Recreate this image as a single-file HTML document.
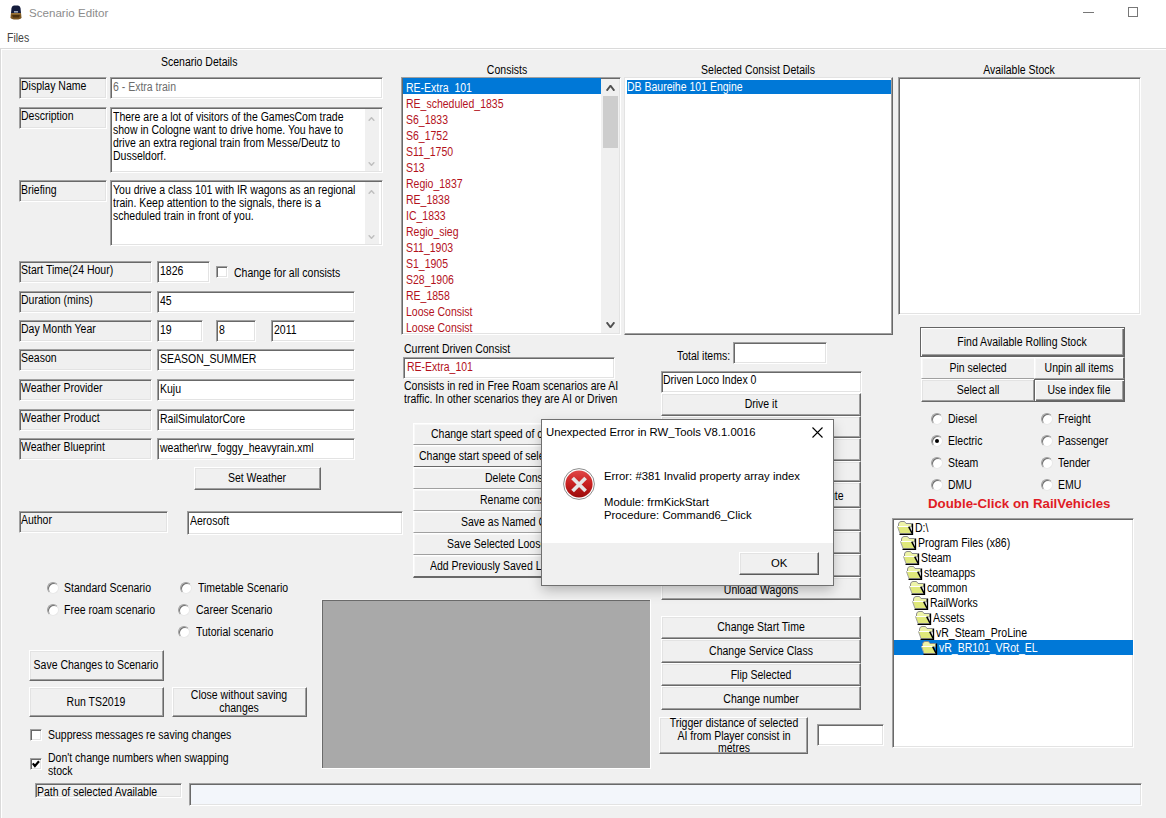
<!DOCTYPE html>
<html><head><meta charset="utf-8"><style>
*{box-sizing:border-box;margin:0;padding:0}
html,body{width:1166px;height:818px;overflow:hidden;background:#f0f0f0}
body{position:relative;font-family:"Liberation Sans",sans-serif;font-size:12px;line-height:12px;color:#000}
.r{position:absolute}
.t{position:absolute;white-space:pre;font-size:12px;line-height:12px;transform:scaleX(.875);transform-origin:0 0}
.t.c{transform:translateX(-50%) scaleX(.875);transform-origin:50% 0}
.dt{position:absolute;white-space:pre;font-size:11.3px;line-height:12px;color:#000}
.sk{position:absolute;border:1px solid;border-color:#a0a0a0 #fff #fff #a0a0a0;box-shadow:inset 1px 1px #696969,inset -1px -1px #e3e3e3}
.bt{position:absolute;background:#f0f0f0;border:1px solid;border-color:#fff #696969 #696969 #fff;box-shadow:inset -1px -1px #a0a0a0,inset 1px 1px #e3e3e3}
.bt.fl{border-color:#fff #a0a0a0 #a0a0a0 #fff;box-shadow:inset 1px 1px #f8f8f8}
.bt.df{border:1px solid #646464;box-shadow:inset 1px 1px #fff,inset -1px -1px #696969,inset -2px -2px #a0a0a0}
.rd{position:absolute;width:12px;height:12px;border-radius:50%;background:#fff;box-shadow:inset 1px 1px 0 0 #707070;border:1px solid;border-color:#a0a0a0 #e8e8e8 #e8e8e8 #a0a0a0}
.rd.on::after{content:"";position:absolute;left:3px;top:3px;width:4px;height:4px;border-radius:50%;background:#000}
.cb{position:absolute;width:12px;height:12px;background:#fff;border:1px solid;border-color:#a0a0a0 #fff #fff #a0a0a0;box-shadow:inset 1px 1px #696969,inset -1px -1px #e3e3e3}
</style></head><body>
<div class="r" style="left:0px;top:0px;width:1166px;height:48px;background:#fff"></div>
<div class="r" style="left:0px;top:48px;width:1166px;height:1px;background:#dadada"></div>
<div class="r" style="left:0px;top:49px;width:1166px;height:1px;background:#fff"></div>
<div class="r" style="left:0px;top:48px;width:1px;height:770px;background:#dadada"></div>
<div class="r" style="left:1px;top:49px;width:1px;height:769px;background:#fff"></div>
<svg class="r" style="left:10px;top:5px" width="12" height="15" viewBox="0 0 12 15"><path d="M1.5 3 Q2 0.5 4 0.5 L8 0.5 Q10 0.5 10.5 3 L11 8 L1 8 Z" fill="#141c3c"/><rect x="4" y="6" width="4" height="1.6" fill="#9aa4b8"/><path d="M1 8 L11 8 L11.5 12.5 Q11 14.5 6 14.5 Q1 14.5 0.5 12.5 Z" fill="#7a5520"/><path d="M2 9.5 L10 9.5 L9 12.5 L3 12.5 Z" fill="#4a300e"/><rect x="1.5" y="8.3" width="9" height="1.2" fill="#a88040"/></svg>
<div class="dt" style="left:29px;top:7px;font-size:11.6px;color:#8c8c8c">Scenario Editor</div>
<div class="r" style="left:1083px;top:12px;width:11px;height:1px;background:#777"></div>
<div class="r" style="left:1128px;top:7px;width:10px;height:10px;border:1px solid #777"></div>
<div class="t" style="left:7px;top:32px;color:#444;">Files</div>
<div class="t" style="left:161px;top:56px;">Scenario Details</div>
<div class="sk" style="left:19px;top:77px;width:88px;height:22px;background:#f0f0f0;"></div>
<div class="t" style="left:21px;top:80px;">Display Name</div>
<div class="sk" style="left:110px;top:77px;width:273px;height:22px;background:#fff;"></div>
<div class="t" style="left:113px;top:81px;color:#6d6d6d;">6 - Extra train</div>
<div class="sk" style="left:19px;top:107px;width:88px;height:22px;background:#f0f0f0;"></div>
<div class="t" style="left:21px;top:110px;">Description</div>
<div class="sk" style="left:110px;top:107px;width:273px;height:66px;background:#fff;"></div>
<div class="r" style="left:365px;top:109px;width:14px;height:62px;background:#f0f0f0"></div>
<div class="t" style="left:113px;top:111px;">There are a lot of visitors of the GamesCom trade</div>
<div class="t" style="left:113px;top:124px;">show in Cologne want to drive home. You have to</div>
<div class="t" style="left:113px;top:137px;">drive an extra regional train from Messe/Deutz to</div>
<div class="t" style="left:113px;top:150px;">Dusseldorf.</div>
<div class="sk" style="left:19px;top:180px;width:88px;height:22px;background:#f0f0f0;"></div>
<div class="t" style="left:21px;top:184px;">Briefing</div>
<div class="sk" style="left:110px;top:180px;width:273px;height:66px;background:#fff;"></div>
<div class="r" style="left:365px;top:182px;width:14px;height:62px;background:#f0f0f0"></div>
<div class="t" style="left:113px;top:184px;">You drive a class 101 with IR wagons as an regional</div>
<div class="t" style="left:113px;top:197px;">train. Keep attention to the signals, there is a</div>
<div class="t" style="left:113px;top:210px;">scheduled train in front of you.</div>
<svg class="r" style="left:368px;top:117px" width="7" height="4"><path d="M0.7 3.7 L3.5 0.7 L6.3 3.7" stroke="#c0c0c0" stroke-width="1.5" fill="none"/></svg>
<svg class="r" style="left:368px;top:162px" width="7" height="4"><path d="M0.7 0.3 L3.5 3.3 L6.3 0.3" stroke="#c0c0c0" stroke-width="1.5" fill="none"/></svg>
<svg class="r" style="left:368px;top:190px" width="7" height="4"><path d="M0.7 3.7 L3.5 0.7 L6.3 3.7" stroke="#c0c0c0" stroke-width="1.5" fill="none"/></svg>
<svg class="r" style="left:368px;top:235px" width="7" height="4"><path d="M0.7 0.3 L3.5 3.3 L6.3 0.3" stroke="#c0c0c0" stroke-width="1.5" fill="none"/></svg>
<div class="sk" style="left:19px;top:261px;width:133px;height:22px;background:#f0f0f0;"></div>
<div class="t" style="left:21px;top:264px;">Start Time(24 Hour)</div>
<div class="sk" style="left:19px;top:291px;width:133px;height:22px;background:#f0f0f0;"></div>
<div class="t" style="left:21px;top:294px;">Duration (mins)</div>
<div class="sk" style="left:19px;top:320px;width:133px;height:22px;background:#f0f0f0;"></div>
<div class="t" style="left:21px;top:323px;">Day Month Year</div>
<div class="sk" style="left:19px;top:349px;width:133px;height:22px;background:#f0f0f0;"></div>
<div class="t" style="left:21px;top:352px;">Season</div>
<div class="sk" style="left:19px;top:379px;width:133px;height:22px;background:#f0f0f0;"></div>
<div class="t" style="left:21px;top:382px;">Weather Provider</div>
<div class="sk" style="left:19px;top:409px;width:133px;height:22px;background:#f0f0f0;"></div>
<div class="t" style="left:21px;top:412px;">Weather Product</div>
<div class="sk" style="left:19px;top:438px;width:133px;height:22px;background:#f0f0f0;"></div>
<div class="t" style="left:21px;top:441px;">Weather Blueprint</div>
<div class="sk" style="left:157px;top:261px;width:53px;height:22px;background:#fff;"></div>
<div class="t" style="left:160px;top:265px;">1826</div>
<div class="cb" style="left:216px;top:266px"></div>
<div class="t" style="left:234px;top:267px;">Change for all consists</div>
<div class="sk" style="left:157px;top:291px;width:198px;height:22px;background:#fff;"></div>
<div class="t" style="left:160px;top:295px;">45</div>
<div class="sk" style="left:157px;top:320px;width:46px;height:22px;background:#fff;"></div>
<div class="t" style="left:160px;top:324px;">19</div>
<div class="sk" style="left:216px;top:320px;width:40px;height:22px;background:#fff;"></div>
<div class="t" style="left:219px;top:324px;">8</div>
<div class="sk" style="left:271px;top:320px;width:84px;height:22px;background:#fff;"></div>
<div class="t" style="left:274px;top:324px;">2011</div>
<div class="sk" style="left:157px;top:349px;width:198px;height:22px;background:#fff;"></div>
<div class="t" style="left:160px;top:353px;">SEASON_SUMMER</div>
<div class="sk" style="left:157px;top:379px;width:198px;height:22px;background:#fff;"></div>
<div class="t" style="left:160px;top:383px;">Kuju</div>
<div class="sk" style="left:157px;top:409px;width:198px;height:22px;background:#fff;"></div>
<div class="t" style="left:160px;top:413px;">RailSimulatorCore</div>
<div class="sk" style="left:157px;top:438px;width:198px;height:22px;background:#fff;"></div>
<div class="t" style="left:160px;top:442px;">weather\rw_foggy_heavyrain.xml</div>
<div class="bt" style="left:194px;top:467px;width:127px;height:23px;"></div>
<div class="t c" style="left:257px;top:472px;">Set Weather</div>
<div class="sk" style="left:19px;top:511px;width:149px;height:22px;background:#f0f0f0;"></div>
<div class="t" style="left:21px;top:514px;">Author</div>
<div class="sk" style="left:187px;top:511px;width:216px;height:24px;background:#fff;"></div>
<div class="t" style="left:190px;top:515px;">Aerosoft</div>
<div class="rd" style="left:47px;top:582px"></div>
<div class="t" style="left:64px;top:582px;">Standard Scenario</div>
<div class="rd" style="left:180px;top:582px"></div>
<div class="t" style="left:198px;top:582px;">Timetable Scenario</div>
<div class="rd" style="left:47px;top:604px"></div>
<div class="t" style="left:64px;top:604px;">Free roam scenario</div>
<div class="rd" style="left:178px;top:604px"></div>
<div class="t" style="left:196px;top:604px;">Career Scenario</div>
<div class="rd" style="left:178px;top:626px"></div>
<div class="t" style="left:196px;top:626px;">Tutorial scenario</div>
<div class="bt" style="left:29px;top:650px;width:135px;height:31px;"></div>
<div class="t c" style="left:96px;top:659px;">Save Changes to Scenario</div>
<div class="bt" style="left:29px;top:687px;width:135px;height:30px;"></div>
<div class="t c" style="left:96px;top:696px;">Run TS2019</div>
<div class="bt" style="left:172px;top:687px;width:135px;height:30px;"></div>
<div class="t c" style="left:239px;top:689px;">Close without saving</div>
<div class="t c" style="left:239px;top:702px;">changes</div>
<div class="cb" style="left:30px;top:729px"></div>
<div class="t" style="left:48px;top:729px;">Suppress messages re saving changes</div>
<div class="cb" style="left:30px;top:758px"><svg width="10" height="10" style="position:absolute;left:0px;top:0px"><path d="M1.8 4.4 L3.9 7 L8 2.2" stroke="#000" stroke-width="2.2" fill="none"/></svg></div>
<div class="t" style="left:48px;top:752px;">Don't change numbers when swapping</div>
<div class="t" style="left:48px;top:765px;">stock</div>
<div class="sk" style="left:35px;top:783px;width:147px;height:15px;background:#f0f0f0;overflow:hidden"><div class="t" style="left:1px;top:2px">Path of selected Available</div></div>
<div class="sk" style="left:189px;top:783px;width:953px;height:23px;background:#f3f6fb;"></div>
<div class="r" style="left:321px;top:599px;width:330px;height:170px;background:#a9a9a9;border:1px solid;border-color:#f6f6f6 #fff #fff #f6f6f6;box-shadow:inset 1px 1px #6a6a6a"></div>
<div class="t c" style="left:507px;top:64px;">Consists</div>
<div class="sk" style="left:401px;top:77px;width:220px;height:258px;background:#fff;"></div>
<div class="r" style="left:403px;top:78px;width:198px;height:16px;background:#0078d7"></div>
<div class="r" style="left:403px;top:78px;width:198px;height:255px;overflow:hidden">
<div class="t" style="left:3px;top:4px;color:#fff">RE-Extra_101</div>
<div class="t" style="left:3px;top:20px;color:#b3121c">RE_scheduled_1835</div>
<div class="t" style="left:3px;top:36px;color:#b3121c">S6_1833</div>
<div class="t" style="left:3px;top:52px;color:#b3121c">S6_1752</div>
<div class="t" style="left:3px;top:68px;color:#b3121c">S11_1750</div>
<div class="t" style="left:3px;top:84px;color:#b3121c">S13</div>
<div class="t" style="left:3px;top:100px;color:#b3121c">Regio_1837</div>
<div class="t" style="left:3px;top:116px;color:#b3121c">RE_1838</div>
<div class="t" style="left:3px;top:132px;color:#b3121c">IC_1833</div>
<div class="t" style="left:3px;top:148px;color:#b3121c">Regio_sieg</div>
<div class="t" style="left:3px;top:164px;color:#b3121c">S11_1903</div>
<div class="t" style="left:3px;top:180px;color:#b3121c">S1_1905</div>
<div class="t" style="left:3px;top:196px;color:#b3121c">S28_1906</div>
<div class="t" style="left:3px;top:212px;color:#b3121c">RE_1858</div>
<div class="t" style="left:3px;top:228px;color:#b3121c">Loose Consist</div>
<div class="t" style="left:3px;top:244px;color:#b3121c">Loose Consist</div>
</div>
<div class="r" style="left:601px;top:79px;width:18px;height:254px;background:#f0f0f0"></div>
<div class="r" style="left:603px;top:96px;width:15px;height:52px;background:#cdcdcd"></div>
<svg class="r" style="left:606px;top:85px" width="9" height="6"><path d="M0.7 5.7 L4.5 0.7 L8.3 5.7" stroke="#505050" stroke-width="1.9" fill="none"/></svg>
<svg class="r" style="left:606px;top:322px" width="9" height="6"><path d="M0.7 0.3 L4.5 5.3 L8.3 0.3" stroke="#505050" stroke-width="1.9" fill="none"/></svg>
<div class="t" style="left:404px;top:343px;">Current Driven Consist</div>
<div class="sk" style="left:403px;top:357px;width:212px;height:22px;background:#fff;"></div>
<div class="t" style="left:407px;top:361px;color:#b3121c;">RE-Extra_101</div>
<div class="t" style="left:404px;top:380px;">Consists in red in Free Roam scenarios are AI</div>
<div class="t" style="left:404px;top:393px;">traffic. In other scenarios they are AI or Driven</div>
<div class="bt fl" style="left:413px;top:423px;width:250px;height:22px"></div>
<div class="t" style="left:431px;top:428px;">Change start speed of consist</div>
<div class="bt fl" style="left:413px;top:445px;width:250px;height:23px;border-bottom:2px solid #696969"></div>
<div class="t" style="left:419px;top:450px;">Change start speed of selected</div>
<div class="bt fl" style="left:413px;top:467px;width:250px;height:22px"></div>
<div class="t" style="left:485px;top:472px;">Delete Consist</div>
<div class="bt fl" style="left:413px;top:489px;width:250px;height:22px"></div>
<div class="t" style="left:480px;top:494px;">Rename consist</div>
<div class="bt fl" style="left:413px;top:511px;width:250px;height:22px"></div>
<div class="t" style="left:461px;top:516px;">Save as Named Consist</div>
<div class="bt fl" style="left:413px;top:533px;width:250px;height:22px"></div>
<div class="t" style="left:447px;top:538px;">Save Selected Loose Consist</div>
<div class="bt fl" style="left:413px;top:555px;width:250px;height:23px;border-bottom:2px solid #696969"></div>
<div class="t" style="left:430px;top:560px;">Add Previously Saved Loose Consist</div>
<div class="t c" style="left:758px;top:64px;">Selected Consist Details</div>
<div class="r" style="left:624px;top:77px;width:269px;height:258px;background:#fff;border:1px solid;border-color:#e3e3e3 #696969 #696969 #e3e3e3;box-shadow:inset -1px -1px #a0a0a0"></div>
<div class="r" style="left:627px;top:80px;width:264px;height:14px;background:#0078d7"></div>
<div class="t" style="left:627px;top:81px;color:#fff;">DB Baureihe 101 Engine</div>
<div class="t" style="left:677px;top:350px;">Total items:</div>
<div class="sk" style="left:733px;top:342px;width:94px;height:22px;background:#fff;"></div>
<div class="sk" style="left:661px;top:371px;width:201px;height:22px;background:#fff;"></div>
<div class="t" style="left:663px;top:374px;">Driven Loco Index 0</div>
<div class="bt" style="left:661px;top:393px;width:200px;height:23px;"></div>
<div class="bt" style="left:661px;top:416px;width:200px;height:22px;"></div>
<div class="bt" style="left:661px;top:438px;width:200px;height:23px;"></div>
<div class="bt" style="left:661px;top:461px;width:200px;height:21px;"></div>
<div class="bt" style="left:661px;top:482px;width:200px;height:26px;"></div>
<div class="bt" style="left:661px;top:508px;width:200px;height:23px;"></div>
<div class="bt" style="left:661px;top:531px;width:200px;height:23px;"></div>
<div class="bt" style="left:661px;top:554px;width:200px;height:23px;"></div>
<div class="bt" style="left:661px;top:577px;width:200px;height:23px;"></div>
<div class="t c" style="left:761px;top:398px;">Drive it</div>
<div class="t" style="left:829px;top:490px;">ute</div>
<div class="t c" style="left:761px;top:584px;">Unload Wagons</div>
<div class="bt" style="left:661px;top:616px;width:200px;height:23px;"></div>
<div class="t c" style="left:761px;top:621px;">Change Start Time</div>
<div class="bt" style="left:661px;top:639px;width:200px;height:24px;"></div>
<div class="t c" style="left:761px;top:645px;">Change Service Class</div>
<div class="bt" style="left:661px;top:663px;width:200px;height:23px;"></div>
<div class="t c" style="left:761px;top:669px;">Flip Selected</div>
<div class="bt" style="left:661px;top:686px;width:200px;height:24px;"></div>
<div class="t c" style="left:761px;top:693px;">Change number</div>
<div class="bt" style="left:659px;top:717px;width:149px;height:37px;overflow:hidden"><div class="t c" style="left:74px;top:-1px">Trigger distance of selected</div><div class="t c" style="left:74px;top:12px">AI from Player consist in</div><div class="t c" style="left:74px;top:24px">metres</div></div>
<div class="sk" style="left:817px;top:724px;width:67px;height:22px;background:#fff;"></div>
<div class="t c" style="left:1019px;top:64px;">Available Stock</div>
<div class="sk" style="left:898px;top:77px;width:243px;height:238px;background:#fff;"></div>
<div class="bt df" style="left:920px;top:327px;width:205px;height:30px;"></div>
<div class="t c" style="left:1022px;top:336px;">Find Available Rolling Stock</div>
<div class="bt fl" style="left:921px;top:357px;width:114px;height:22px"></div>
<div class="t c" style="left:978px;top:362px;">Pin selected</div>
<div class="bt fl" style="left:1034px;top:357px;width:91px;height:22px;border-right:2px solid #696969"></div>
<div class="t c" style="left:1079px;top:362px;">Unpin all items</div>
<div class="bt" style="left:921px;top:379px;width:114px;height:23px;"></div>
<div class="t c" style="left:978px;top:384px;">Select all</div>
<div class="bt df" style="left:1034px;top:379px;width:91px;height:23px;"></div>
<div class="t c" style="left:1079px;top:384px;">Use index file</div>
<div class="rd" style="left:931px;top:413px"></div>
<div class="t" style="left:948px;top:413px;">Diesel</div>
<div class="rd" style="left:1041px;top:413px"></div>
<div class="t" style="left:1058px;top:413px;">Freight</div>
<div class="rd on" style="left:931px;top:435px"></div>
<div class="t" style="left:948px;top:435px;">Electric</div>
<div class="rd" style="left:1041px;top:435px"></div>
<div class="t" style="left:1058px;top:435px;">Passenger</div>
<div class="rd" style="left:931px;top:457px"></div>
<div class="t" style="left:948px;top:457px;">Steam</div>
<div class="rd" style="left:1041px;top:457px"></div>
<div class="t" style="left:1058px;top:457px;">Tender</div>
<div class="rd" style="left:931px;top:479px"></div>
<div class="t" style="left:948px;top:479px;">DMU</div>
<div class="rd" style="left:1041px;top:479px"></div>
<div class="t" style="left:1058px;top:479px;">EMU</div>
<div class="r" style="left:928px;top:497px;font-size:13.3px;line-height:14px;font-weight:bold;color:#e01b24;white-space:pre">Double-Click on RailVehicles</div>
<div class="sk" style="left:892px;top:518px;width:242px;height:230px;background:#fff;"></div>
<div class="r" style="left:894px;top:640px;width:239px;height:15px;background:#0078d7"></div>
<svg class="r" style="left:897px;top:521px" width="17" height="14" viewBox="0 0 17 14"><path d="M1.5 3 Q2 0.5 4 0.5 L7.5 0.5 L9 2.5 L14.5 2.5 L14.5 6 L1.5 6 Z" fill="#eef4a8" stroke="#8c8c8c" stroke-width="1"/><path d="M0.5 5.5 L11.5 5.5 L15 12.5 L3 12.5 Z" fill="#dfe87a" stroke="#a0a0a0" stroke-width="1"/><path d="M0.8 5.5 L11.5 5.5" stroke="#fff" stroke-width="1"/><path d="M11.8 5.8 L15.2 12.5" stroke="#000" stroke-width="1.5" fill="none"/><path d="M15.5 2.5 L15.5 13.5 L2.5 13.5" stroke="#000" stroke-width="1.3" fill="none"/></svg>
<div class="t" style="left:915px;top:522px;color:#000;">D:\</div>
<svg class="r" style="left:900px;top:536px" width="17" height="14" viewBox="0 0 17 14"><path d="M1.5 3 Q2 0.5 4 0.5 L7.5 0.5 L9 2.5 L14.5 2.5 L14.5 6 L1.5 6 Z" fill="#eef4a8" stroke="#8c8c8c" stroke-width="1"/><path d="M0.5 5.5 L11.5 5.5 L15 12.5 L3 12.5 Z" fill="#dfe87a" stroke="#a0a0a0" stroke-width="1"/><path d="M0.8 5.5 L11.5 5.5" stroke="#fff" stroke-width="1"/><path d="M11.8 5.8 L15.2 12.5" stroke="#000" stroke-width="1.5" fill="none"/><path d="M15.5 2.5 L15.5 13.5 L2.5 13.5" stroke="#000" stroke-width="1.3" fill="none"/></svg>
<div class="t" style="left:918px;top:537px;color:#000;">Program Files (x86)</div>
<svg class="r" style="left:903px;top:551px" width="17" height="14" viewBox="0 0 17 14"><path d="M1.5 3 Q2 0.5 4 0.5 L7.5 0.5 L9 2.5 L14.5 2.5 L14.5 6 L1.5 6 Z" fill="#eef4a8" stroke="#8c8c8c" stroke-width="1"/><path d="M0.5 5.5 L11.5 5.5 L15 12.5 L3 12.5 Z" fill="#dfe87a" stroke="#a0a0a0" stroke-width="1"/><path d="M0.8 5.5 L11.5 5.5" stroke="#fff" stroke-width="1"/><path d="M11.8 5.8 L15.2 12.5" stroke="#000" stroke-width="1.5" fill="none"/><path d="M15.5 2.5 L15.5 13.5 L2.5 13.5" stroke="#000" stroke-width="1.3" fill="none"/></svg>
<div class="t" style="left:921px;top:552px;color:#000;">Steam</div>
<svg class="r" style="left:906px;top:566px" width="17" height="14" viewBox="0 0 17 14"><path d="M1.5 3 Q2 0.5 4 0.5 L7.5 0.5 L9 2.5 L14.5 2.5 L14.5 6 L1.5 6 Z" fill="#eef4a8" stroke="#8c8c8c" stroke-width="1"/><path d="M0.5 5.5 L11.5 5.5 L15 12.5 L3 12.5 Z" fill="#dfe87a" stroke="#a0a0a0" stroke-width="1"/><path d="M0.8 5.5 L11.5 5.5" stroke="#fff" stroke-width="1"/><path d="M11.8 5.8 L15.2 12.5" stroke="#000" stroke-width="1.5" fill="none"/><path d="M15.5 2.5 L15.5 13.5 L2.5 13.5" stroke="#000" stroke-width="1.3" fill="none"/></svg>
<div class="t" style="left:924px;top:567px;color:#000;">steamapps</div>
<svg class="r" style="left:909px;top:581px" width="17" height="14" viewBox="0 0 17 14"><path d="M1.5 3 Q2 0.5 4 0.5 L7.5 0.5 L9 2.5 L14.5 2.5 L14.5 6 L1.5 6 Z" fill="#eef4a8" stroke="#8c8c8c" stroke-width="1"/><path d="M0.5 5.5 L11.5 5.5 L15 12.5 L3 12.5 Z" fill="#dfe87a" stroke="#a0a0a0" stroke-width="1"/><path d="M0.8 5.5 L11.5 5.5" stroke="#fff" stroke-width="1"/><path d="M11.8 5.8 L15.2 12.5" stroke="#000" stroke-width="1.5" fill="none"/><path d="M15.5 2.5 L15.5 13.5 L2.5 13.5" stroke="#000" stroke-width="1.3" fill="none"/></svg>
<div class="t" style="left:927px;top:582px;color:#000;">common</div>
<svg class="r" style="left:912px;top:596px" width="17" height="14" viewBox="0 0 17 14"><path d="M1.5 3 Q2 0.5 4 0.5 L7.5 0.5 L9 2.5 L14.5 2.5 L14.5 6 L1.5 6 Z" fill="#eef4a8" stroke="#8c8c8c" stroke-width="1"/><path d="M0.5 5.5 L11.5 5.5 L15 12.5 L3 12.5 Z" fill="#dfe87a" stroke="#a0a0a0" stroke-width="1"/><path d="M0.8 5.5 L11.5 5.5" stroke="#fff" stroke-width="1"/><path d="M11.8 5.8 L15.2 12.5" stroke="#000" stroke-width="1.5" fill="none"/><path d="M15.5 2.5 L15.5 13.5 L2.5 13.5" stroke="#000" stroke-width="1.3" fill="none"/></svg>
<div class="t" style="left:930px;top:597px;color:#000;">RailWorks</div>
<svg class="r" style="left:915px;top:611px" width="17" height="14" viewBox="0 0 17 14"><path d="M1.5 3 Q2 0.5 4 0.5 L7.5 0.5 L9 2.5 L14.5 2.5 L14.5 6 L1.5 6 Z" fill="#eef4a8" stroke="#8c8c8c" stroke-width="1"/><path d="M0.5 5.5 L11.5 5.5 L15 12.5 L3 12.5 Z" fill="#dfe87a" stroke="#a0a0a0" stroke-width="1"/><path d="M0.8 5.5 L11.5 5.5" stroke="#fff" stroke-width="1"/><path d="M11.8 5.8 L15.2 12.5" stroke="#000" stroke-width="1.5" fill="none"/><path d="M15.5 2.5 L15.5 13.5 L2.5 13.5" stroke="#000" stroke-width="1.3" fill="none"/></svg>
<div class="t" style="left:933px;top:612px;color:#000;">Assets</div>
<svg class="r" style="left:918px;top:626px" width="17" height="14" viewBox="0 0 17 14"><path d="M1.5 3 Q2 0.5 4 0.5 L7.5 0.5 L9 2.5 L14.5 2.5 L14.5 6 L1.5 6 Z" fill="#eef4a8" stroke="#8c8c8c" stroke-width="1"/><path d="M0.5 5.5 L11.5 5.5 L15 12.5 L3 12.5 Z" fill="#dfe87a" stroke="#a0a0a0" stroke-width="1"/><path d="M0.8 5.5 L11.5 5.5" stroke="#fff" stroke-width="1"/><path d="M11.8 5.8 L15.2 12.5" stroke="#000" stroke-width="1.5" fill="none"/><path d="M15.5 2.5 L15.5 13.5 L2.5 13.5" stroke="#000" stroke-width="1.3" fill="none"/></svg>
<div class="t" style="left:936px;top:627px;color:#000;">vR_Steam_ProLine</div>
<svg class="r" style="left:921px;top:641px" width="17" height="14" viewBox="0 0 17 14"><path d="M1.5 3 Q2 0.5 4 0.5 L7.5 0.5 L9 2.5 L14.5 2.5 L14.5 6 L1.5 6 Z" fill="#eef4a8" stroke="#8c8c8c" stroke-width="1"/><path d="M0.5 5.5 L11.5 5.5 L15 12.5 L3 12.5 Z" fill="#dfe87a" stroke="#a0a0a0" stroke-width="1"/><path d="M0.8 5.5 L11.5 5.5" stroke="#fff" stroke-width="1"/><path d="M11.8 5.8 L15.2 12.5" stroke="#000" stroke-width="1.5" fill="none"/><path d="M15.5 2.5 L15.5 13.5 L2.5 13.5" stroke="#000" stroke-width="1.3" fill="none"/></svg>
<div class="t" style="left:939px;top:642px;color:#fff;">vR_BR101_VRot_EL</div>
<div class="r" style="left:542px;top:420px;width:291px;height:165px;box-shadow:0 5px 12px rgba(0,0,0,.26)"></div>
<div class="r" style="left:541px;top:419px;width:293px;height:167px;background:#fff;border:1px solid #707070"></div>
<div class="r" style="left:542px;top:543px;width:291px;height:42px;background:#f0f0f0"></div>
<div class="dt" style="left:546px;top:426px">Unexpected Error in RW_Tools V8.1.0016</div>
<svg class="r" style="left:812px;top:427px" width="11" height="11"><path d="M0.5 0.5 L10.5 10.5 M10.5 0.5 L0.5 10.5" stroke="#000" stroke-width="1.1"/></svg>
<svg class="r" style="left:563px;top:468px" width="32" height="32" viewBox="0 0 32 32"><defs><linearGradient id="eg" x1="0" y1="0" x2="0" y2="1"><stop offset="0" stop-color="#e04848"/><stop offset=".5" stop-color="#c82020"/><stop offset="1" stop-color="#9a0c0c"/></linearGradient></defs><circle cx="16" cy="16" r="15.4" fill="#fff" stroke="#808080" stroke-width="0.9"/><circle cx="16" cy="16" r="13.6" fill="url(#eg)"/><path d="M9.6 10 L22.6 23 M22.6 10 L9.6 23" stroke="#e6e6e6" stroke-width="3.8"/></svg>
<div class="dt" style="left:604px;top:470px">Error: #381 Invalid property array index</div>
<div class="dt" style="left:604px;top:496px">Module: frmKickStart</div>
<div class="dt" style="left:604px;top:509px">Procedure: Command6_Click</div>
<div class="r" style="left:739px;top:552px;width:80px;height:23px;background:#f0f0f0;border:1px solid;border-color:#fff #5a5a5a #5a5a5a #fff;box-shadow:inset -1px -1px #a0a0a0, inset 1px 1px #e3e3e3"></div>
<div class="dt" style="left:771px;top:557px">OK</div>
</body></html>
